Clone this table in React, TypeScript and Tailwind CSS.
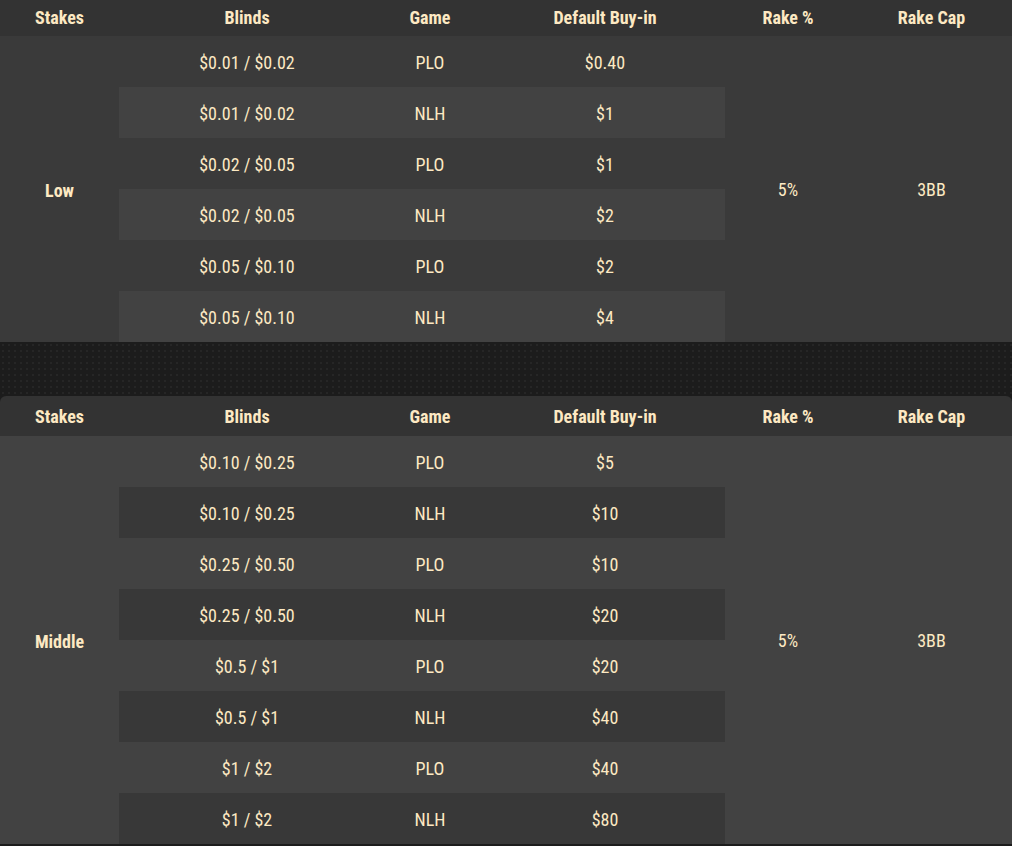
type Row = [string, string, string];

const lowRows: Row[] = [
  ["$0.01 / $0.02", "PLO", "$0.40"],
  ["$0.01 / $0.02", "NLH", "$1"],
  ["$0.02 / $0.05", "PLO", "$1"],
  ["$0.02 / $0.05", "NLH", "$2"],
  ["$0.05 / $0.10", "PLO", "$2"],
  ["$0.05 / $0.10", "NLH", "$4"],
];

const midRows: Row[] = [
  ["$0.10 / $0.25", "PLO", "$5"],
  ["$0.10 / $0.25", "NLH", "$10"],
  ["$0.25 / $0.50", "PLO", "$10"],
  ["$0.25 / $0.50", "NLH", "$20"],
  ["$0.5 / $1", "PLO", "$20"],
  ["$0.5 / $1", "NLH", "$40"],
  ["$1 / $2", "PLO", "$40"],
  ["$1 / $2", "NLH", "$80"],
];

function Header({ tall }: { tall?: boolean }) {
  const cols = ["Stakes", "Blinds", "Game", "Default Buy-in", "Rake %", "Rake Cap"];
  return (
    <div
      className={`grid grid-cols-[119px_256px_110px_240px_126px_1fr] bg-[#333333] font-bold ${
        tall ? "h-[40px] rounded-t-[6px] pt-[2px]" : "h-[36px]"
      }`}
    >
      {cols.map((c) => (
        <div key={c} className="flex items-center justify-center">
          {c}
        </div>
      ))}
    </div>
  );
}

function Body({
  label,
  rows,
  base,
  stripe,
}: {
  label: string;
  rows: Row[];
  base: string;
  stripe: string;
}) {
  return (
    <div className={`flex ${base}`}>
      <div className="w-[119px] flex items-center justify-center font-bold pt-[3px]">{label}</div>
      <div className="w-[606px] flex flex-col">
        {rows.map((r, i) => (
          <div
            key={i}
            className={`grid grid-cols-[256px_110px_240px] h-[51px] ${i % 2 === 1 ? stripe : ""}`}
          >
            {r.map((c, j) => (
              <div key={j} className="flex items-center justify-center pt-[2px]">
                {c}
              </div>
            ))}
          </div>
        ))}
      </div>
      <div className="w-[126px] flex items-center justify-center pt-[2px]">5%</div>
      <div className="flex-1 flex items-center justify-center pt-[2px]">3BB</div>
    </div>
  );
}

export default function App() {
  return (
    <div
      className="w-[1012px] h-[846px] overflow-hidden bg-[#1c1c1c] text-[#fde9c3] text-[18px] leading-none"
      style={{ fontFamily: "'Roboto Condensed', Roboto, 'Liberation Sans', sans-serif" }}
    >
      <Header />
      <Body label="Low" rows={lowRows} base="bg-[#3a3a3a]" stripe="bg-[#424242]" />
      <div className="h-[54px] bg-[#1c1c1c] bg-[radial-gradient(#262626_1px,transparent_1.2px)] bg-[size:6px_6px]" />
      <Header tall />
      <Body label="Middle" rows={midRows} base="bg-[#424242]" stripe="bg-[#383838]" />
    </div>
  );
}
